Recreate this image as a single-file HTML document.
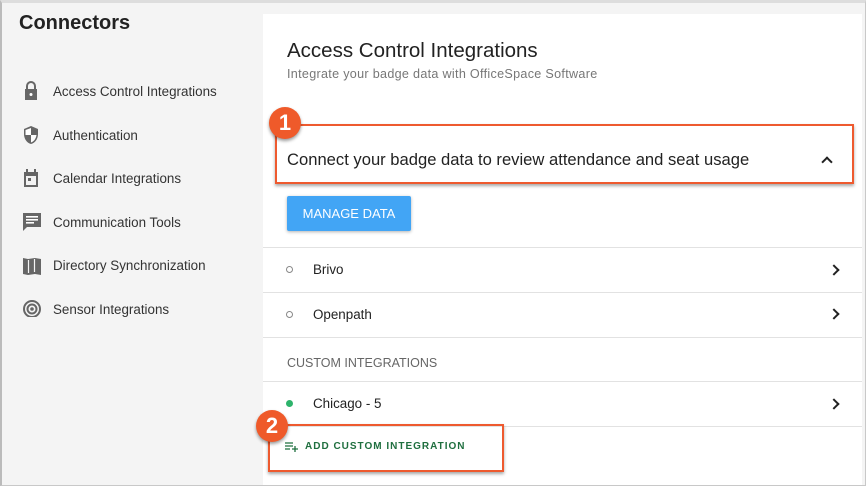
<!DOCTYPE html>
<html><head><style>
*{margin:0;padding:0;box-sizing:border-box}
body{width:866px;height:486px;background:#f4f4f4;font-family:"Liberation Sans",sans-serif;position:relative;overflow:hidden;color:#222}
.frame{position:absolute;left:0;top:0;width:866px;height:486px;border:1px solid #c8c8c8;border-top:3px solid #ddd;border-left:2px solid #bbb}
.t{position:absolute;white-space:nowrap}
.nav{position:absolute;left:53px;font-size:13.4px;color:#333}
.ic{position:absolute;left:22px}
.card{position:absolute;left:263px;top:14px;width:599px;height:472px;background:#fff}
.hr{position:absolute;left:263px;width:599px;height:1px;background:#e2e2e2}
.chev{position:absolute;left:830px;width:8px;height:8px;border-right:2px solid #222;border-top:2px solid #222;transform:rotate(45deg)}
.badge{position:absolute;width:32px;height:32px;border-radius:50%;background:#ef5a2a;color:#fff;font-weight:bold;font-size:22px;text-align:center;line-height:32px;box-shadow:0 2px 3px rgba(0,0,0,.4)}
.box{position:absolute;border:2px solid #ee5a2f;box-shadow:0 2px 3px rgba(0,0,0,.35)}
</style></head><body>
<div class="card"></div>
<div class="t" style="left:19px;top:12px;font-size:20px;font-weight:bold;color:#222">Connectors</div>

<svg class="ic" style="top:81px" width="18" height="20" viewBox="0 0 18 20"><path d="M4 8V5a5 5 0 0110 0v3h1v11H3V8z M6 8h6V5a3 3 0 00-6 0z" fill="#666" fill-rule="evenodd"/><circle cx="9" cy="13.5" r="1.5" fill="#fff"/></svg>
<div class="nav" style="top:84px">Access Control Integrations</div>
<svg class="ic" style="top:125px" width="18" height="20" viewBox="0 0 18 20"><path d="M9 1L2 4v5c0 5 3 9 7 10 4-1 7-5 7-10V4z" fill="#666"/><path d="M9 3v7H3.5V5zM9 10h5.5c-.5 3.5-2.5 6.5-5.5 7.5z" fill="#fff"/></svg>
<div class="nav" style="top:128px">Authentication</div>
<svg class="ic" style="top:168px" width="18" height="20" viewBox="0 0 18 20"><path d="M2 4h14v15H2z M4 8v9h10V8z" fill="#666" fill-rule="evenodd"/><rect x="4" y="1" width="2" height="4" fill="#666"/><rect x="12" y="1" width="2" height="4" fill="#666"/><rect x="6" y="10" width="3" height="3" fill="#666"/></svg>
<div class="nav" style="top:171px">Calendar Integrations</div>
<svg class="ic" style="top:212px" width="20" height="20" viewBox="0 0 20 20"><path d="M1 1h18v14H5l-4 4z" fill="#666"/><rect x="4" y="4" width="12" height="1.6" fill="#fff"/><rect x="4" y="7" width="12" height="1.6" fill="#fff"/><rect x="4" y="10" width="8" height="1.6" fill="#fff"/></svg>
<div class="nav" style="top:215px">Communication Tools</div>
<svg class="ic" style="top:256px" width="20" height="20" viewBox="0 0 20 20"><path d="M1 2l5 1 7-1 6 1v16l-6-1-7 1-5-1z" fill="#666"/><path d="M6.5 4v13M12.5 3v13" stroke="#f4f4f4" stroke-width="1.2"/></svg>
<div class="nav" style="top:258px">Directory Synchronization</div>
<svg class="ic" style="top:299px" width="20" height="20" viewBox="0 0 20 20"><circle cx="10" cy="10" r="8" fill="none" stroke="#666" stroke-width="2"/><circle cx="10" cy="10" r="4.5" fill="none" stroke="#666" stroke-width="2"/><circle cx="10" cy="10" r="1.8" fill="#666"/><path d="M6 18h8v2H6z" fill="#f4f4f4"/></svg>
<div class="nav" style="top:302px">Sensor Integrations</div>

<div class="t" style="left:287px;top:39px;font-size:20.5px;color:#222">Access Control Integrations</div>
<div class="t" style="left:287px;top:67px;font-size:12.6px;letter-spacing:.3px;color:#777">Integrate your badge data with OfficeSpace Software</div>

<div class="box" style="left:275px;top:124px;width:579px;height:60px"></div>
<div class="t" style="left:287px;top:150px;font-size:16.6px;color:#222">Connect your badge data to review attendance and seat usage</div>
<div style="position:absolute;left:823px;top:158px;width:8px;height:8px;border-left:2px solid #222;border-top:2px solid #222;transform:rotate(45deg)"></div>
<div class="badge" style="left:269px;top:107px">1</div>

<div style="position:absolute;left:287px;top:196px;width:124px;height:35px;background:#42a5f5;border-radius:2px;box-shadow:0 1px 3px rgba(0,0,0,.3);color:#fff;font-size:13px;text-align:center;line-height:35px">MANAGE DATA</div>

<div class="hr" style="top:247px"></div>
<div style="position:absolute;left:286px;top:266px;width:7px;height:7px;border:1px solid #888;border-radius:50%"></div>
<div class="t" style="left:313px;top:262px;font-size:13.4px">Brivo</div>
<div class="chev" style="top:266px"></div>
<div class="hr" style="top:292px"></div>
<div style="position:absolute;left:286px;top:311px;width:7px;height:7px;border:1px solid #888;border-radius:50%"></div>
<div class="t" style="left:313px;top:307px;font-size:13.4px">Openpath</div>
<div class="chev" style="top:310px"></div>
<div class="hr" style="top:337px"></div>
<div class="t" style="left:287px;top:356px;font-size:12.5px;color:#666">CUSTOM INTEGRATIONS</div>
<div class="hr" style="top:381px"></div>
<div style="position:absolute;left:286px;top:400px;width:7px;height:7px;background:#2db36b;border-radius:50%"></div>
<div class="t" style="left:313px;top:396px;font-size:13.4px">Chicago - 5</div>
<div class="chev" style="top:400px"></div>
<div class="hr" style="top:426px"></div>

<div class="box" style="left:268px;top:424px;width:236px;height:48px"></div>
<svg style="position:absolute;left:285px;top:442px" width="14" height="10" viewBox="0 0 14 10"><path d="M0 1h8M0 4h8M0 7h5M10 4v6M7 7h6" stroke="#1f6f3f" stroke-width="1.3"/></svg>
<div class="t" style="left:305px;top:441px;font-size:10px;font-weight:bold;letter-spacing:1px;color:#1f6f3f">ADD CUSTOM INTEGRATION</div>
<div class="badge" style="left:256px;top:410px">2</div>
<div class="frame"></div>
</body></html>
